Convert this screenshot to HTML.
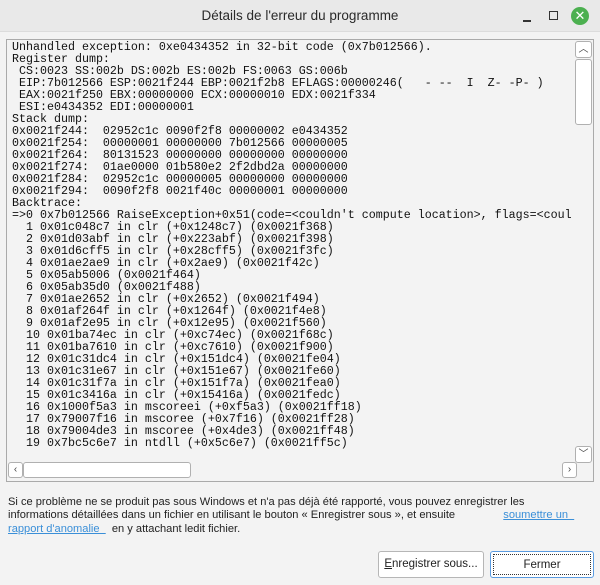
<!DOCTYPE html>
<html><head><meta charset="utf-8"><style>
*{margin:0;padding:0;box-sizing:border-box}
body{width:600px;height:585px;background:#f3f3f3;font-family:"Liberation Sans","DejaVu Sans",sans-serif;position:relative;overflow:hidden}
.tb{position:absolute;left:0;top:0;width:600px;height:32px;background:#e9e9e9;border-bottom:1px solid #dcdcdc}
.title{position:absolute;top:8px;left:0;width:600px;text-align:center;font-size:13.5px;color:#2a2a2a}
.panel{position:absolute;left:6px;top:39px;width:588px;height:443px;border:1px solid #aaa;background:#f3f3f3;overflow:hidden}
pre{position:absolute;left:5px;top:1px;font-family:"Liberation Mono",monospace;font-size:11.67px;line-height:12px;color:#111;white-space:pre}
.sb{position:absolute;background:#fff;border:1px solid #b0b0b0;border-radius:3px;font-size:10px;color:#444;text-align:center}
.txt{position:absolute;left:8px;top:496px;font-size:11.1px;line-height:13.3px;color:#222;width:590px}
.lk{color:#3a8fd8;text-decoration:underline}
.btn{position:absolute;top:551px;height:27px;background:#fff;border:1px solid #b6b6b6;border-radius:3px;font-size:11.5px;text-align:center;line-height:25px;color:#222}
</style></head><body>
<div class="tb"><div class="title">Détails de l'erreur du programme</div>
<div style="position:absolute;left:523px;top:20px;width:8px;height:1.5px;background:#333"></div>
<div style="position:absolute;left:549px;top:11px;width:9px;height:9px;border:1.5px solid #333"></div>
<div style="position:absolute;left:571px;top:7px;width:18px;height:18px;border-radius:50%;background:#4cb050;color:#fff;font-size:13px;font-weight:bold;text-align:center;line-height:18px">✕</div>
</div>
<div class="panel"><pre>Unhandled exception: 0xe0434352 in 32-bit code (0x7b012566).
Register dump:
 CS:0023 SS:002b DS:002b ES:002b FS:0063 GS:006b
 EIP:7b012566 ESP:0021f244 EBP:0021f2b8 EFLAGS:00000246(   - --  I  Z- -P- )
 EAX:0021f250 EBX:00000000 ECX:00000010 EDX:0021f334
 ESI:e0434352 EDI:00000001
Stack dump:
0x0021f244:  02952c1c 0090f2f8 00000002 e0434352
0x0021f254:  00000001 00000000 7b012566 00000005
0x0021f264:  80131523 00000000 00000000 00000000
0x0021f274:  01ae0000 01b580e2 2f2dbd2a 00000000
0x0021f284:  02952c1c 00000005 00000000 00000000
0x0021f294:  0090f2f8 0021f40c 00000001 00000000
Backtrace:
=>0 0x7b012566 RaiseException+0x51(code=&lt;couldn't compute location&gt;, flags=&lt;coul
  1 0x01c048c7 in clr (+0x1248c7) (0x0021f368)
  2 0x01d03abf in clr (+0x223abf) (0x0021f398)
  3 0x01d6cff5 in clr (+0x28cff5) (0x0021f3fc)
  4 0x01ae2ae9 in clr (+0x2ae9) (0x0021f42c)
  5 0x05ab5006 (0x0021f464)
  6 0x05ab35d0 (0x0021f488)
  7 0x01ae2652 in clr (+0x2652) (0x0021f494)
  8 0x01af264f in clr (+0x1264f) (0x0021f4e8)
  9 0x01af2e95 in clr (+0x12e95) (0x0021f560)
  10 0x01ba74ec in clr (+0xc74ec) (0x0021f68c)
  11 0x01ba7610 in clr (+0xc7610) (0x0021f900)
  12 0x01c31dc4 in clr (+0x151dc4) (0x0021fe04)
  13 0x01c31e67 in clr (+0x151e67) (0x0021fe60)
  14 0x01c31f7a in clr (+0x151f7a) (0x0021fea0)
  15 0x01c3416a in clr (+0x15416a) (0x0021fedc)
  16 0x1000f5a3 in mscoreei (+0xf5a3) (0x0021ff18)
  17 0x79007f16 in mscoree (+0x7f16) (0x0021ff28)
  18 0x79004de3 in mscoree (+0x4de3) (0x0021ff48)
  19 0x7bc5c6e7 in ntdll (+0x5c6e7) (0x0021ff5c)</pre>
<div class="sb" style="left:568px;top:1px;width:17px;height:17px;line-height:15px">︿</div>
<div class="sb" style="left:568px;top:19px;width:17px;height:66px"></div>
<div class="sb" style="left:568px;top:406px;width:17px;height:17px;line-height:15px">﹀</div>
<div class="sb" style="left:1px;top:422px;width:15px;height:16px;line-height:14px">‹</div>
<div class="sb" style="left:16px;top:422px;width:168px;height:16px"></div>
<div class="sb" style="left:555px;top:422px;width:15px;height:16px;line-height:14px">›</div>
</div>
<div class="txt">Si ce problème ne se produit pas sous Windows et n'a pas déjà été rapporté, vous pouvez enregistrer les<br>informations détaillées dans un fichier en utilisant le bouton « Enregistrer sous », et ensuite <span style="display:inline-block;width:42px"></span> <span class="lk">soumettre un &nbsp;</span><br><span class="lk">rapport d'anomalie &nbsp;</span> &nbsp;en y attachant ledit fichier.</div>
<div class="btn" style="left:378px;width:106px"><u>E</u>nregistrer sous...</div>
<div class="btn" style="left:490px;width:104px;border:1px solid #5a9be0"><div style="position:absolute;left:2px;top:2px;right:2px;bottom:2px;border:1px dotted #333;line-height:21px">Fermer</div></div>
</body></html>
